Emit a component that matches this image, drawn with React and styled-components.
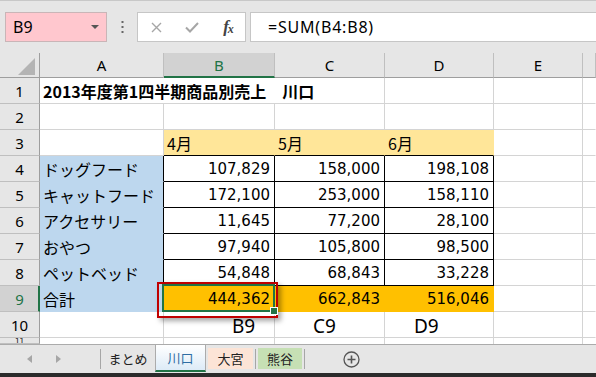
import React from 'react'
import styled, { createGlobalStyle } from 'styled-components'

const GRID = '#D4D4D4'
const GREEN = '#217346'
const YELLOW = '#FFE699'
const BLUE = '#BDD7EE'
const ORANGE = '#FFC000'
const CHROME = '#E6E6E6'

const GlobalStyle = createGlobalStyle`
    html, body {
        margin: 0;
        padding: 0;
        background: #fff;
    }
    body {
        width: 596px;
        height: 377px;
        overflow: hidden;
        font-family: "Noto Sans", sans-serif;
    }
    * {
        box-sizing: border-box;
    }
`

const Window = styled.div`
    width: 596px;
    height: 377px;
    display: flex;
    flex-direction: column;
    background: ${CHROME};
    overflow: hidden;
`

const FormulaBar = styled.div`
    height: 53px;
    flex: none;
    border-top: 1px solid #C8C8C8;
    display: flex;
    align-items: flex-start;
    padding: 11px 0 0 5px;
`

const NameBox = styled.div`
    width: 102px;
    height: 30px;
    background: #FFC7CE;
    border: 1px solid #C9B5B7;
    display: flex;
    align-items: center;
    justify-content: space-between;
    padding: 0 7px 0 7px;
    font-size: 16px;
    color: #000;
`

const Caret = styled.span`
    width: 0;
    height: 0;
    border-left: 4px solid transparent;
    border-right: 4px solid transparent;
    border-top: 4px solid #555;
`

const DotsSlot = styled.div`
    width: 30px;
    height: 30px;
    display: flex;
    align-items: center;
    justify-content: center;
`

const ButtonBox = styled.div`
    width: 109px;
    height: 30px;
    background: #fff;
    border: 1px solid #C6C6C6;
    display: flex;
    align-items: center;
    padding-left: 9px;
    gap: 18px;
`

const BarButton = styled.span`
    width: 18px;
    display: flex;
    justify-content: center;
    color: ${p => p.$dark ? '#444' : '#A6A6A6'};
`

const Fx = styled.span`
    font-family: "Liberation Serif", serif;
    font-style: italic;
    font-weight: 700;
    font-size: 17px;
    color: #444;
    letter-spacing: -1px;
    sub {
        font-size: 12px;
        vertical-align: -1px;
    }
`

const FormulaInput = styled.div`
    flex: 1;
    height: 30px;
    margin-left: 4px;
    background: #fff;
    border: 1px solid #C6C6C6;
    border-right: none;
    display: flex;
    align-items: center;
    padding-left: 17px;
    font-size: 16px;
    letter-spacing: 0.8px;
    color: #000;
`

const Sheet = styled.div`
    position: relative;
    display: grid;
    grid-template-columns: 40px 124px 111px 110px 109px 89px 13px;
    grid-template-rows: 25px repeat(10, 26px) 6px;
    background: #fff;
    flex: none;
    overflow: hidden;
`

const Corner = styled.div`
    background: ${CHROME};
    border-right: 1px solid #9E9E9E;
    border-bottom: 1px solid #9E9E9E;
    display: flex;
    align-items: flex-end;
    justify-content: flex-end;
    padding: 0 4px 2px 0;
`

const ColHead = styled.div`
    background: ${p => p.$sel ? '#D2D2D2' : CHROME};
    color: ${p => p.$sel ? GREEN : '#000'};
    border-right: 1px solid #BFBFBF;
    border-bottom: ${p => p.$sel ? `2px solid ${GREEN}` : '1px solid #9E9E9E'};
    display: flex;
    align-items: center;
    justify-content: center;
    font-size: 15px;
    padding-top: ${p => p.$sel ? '1px' : '0'};
`

const RowHead = styled.div`
    background: ${p => p.$sel ? '#D2D2D2' : CHROME};
    color: ${p => p.$sel ? GREEN : '#000'};
    border-right: ${p => p.$sel ? `2px solid ${GREEN}` : '1px solid #9E9E9E'};
    border-bottom: 1px solid #BFBFBF;
    display: flex;
    align-items: ${p => p.$cut ? 'flex-start' : 'center'};
    justify-content: center;
    font-size: ${p => p.$cut ? '8px' : '15px'};
    padding-left: ${p => p.$sel ? '1px' : '0'};
    overflow: hidden;
    line-height: ${p => p.$cut ? '6px' : 'normal'};
`

const Cell = styled.div`
    position: relative;
    grid-column: ${p => p.$span ? `span ${p.$span}` : 'auto'};
    background: ${p => p.$bg || '#fff'};
    border-right: 1px solid ${p => p.$rb || GRID};
    border-bottom: ${p => p.$nobottom ? 'none' : `1px solid ${p.$bb || GRID}`};
    display: flex;
    align-items: center;
    justify-content: ${p => p.$num ? 'flex-end' : 'flex-start'};
    padding: ${p => p.$num ? '0 4px 0 0' : '0 0 0 3px'};
    font-family: ${p => p.$num ? '"DejaVu Sans", sans-serif' : '"Noto Sans CJK JP", sans-serif'};
    font-size: ${p => p.$num ? '15px' : '16px'};
    font-weight: ${p => p.$bold ? 700 : 400};
    color: #000;
    white-space: nowrap;

    ${p => p.$active && `
        &::after {
            content: '';
            position: absolute;
            top: -2px;
            left: -2px;
            right: -1px;
            bottom: -1px;
            border: 2px solid ${GREEN};
        }
        &::before {
            content: '';
            position: absolute;
            right: -4px;
            bottom: -4px;
            width: 6px;
            height: 6px;
            background: ${GREEN};
            border: 1px solid #fff;
            z-index: 2;
        }
    `}
`

const Label = styled.span`
    font-family: "Noto Sans", sans-serif;
    font-size: 19px;
    padding-left: ${p => p.$pl}px;
    padding-top: 2px;
`

const Callout = styled.div`
    position: absolute;
    left: 157px;
    top: 229px;
    width: 121px;
    height: 36px;
    border: 2px solid #C00000;
    box-shadow: 3px 3px 5px rgba(0, 0, 0, 0.35);
    pointer-events: none;
`

const TabBar = styled.div`
    height: 29px;
    flex: none;
    border-top: 1px solid #ABABAB;
    display: flex;
    align-items: stretch;
    background: ${CHROME};
`

const Nav = styled.div`
    width: 100px;
    display: flex;
    align-items: center;
    padding-left: 27px;
    gap: 24px;
`

const Arrow = styled.span`
    width: 0;
    height: 0;
    border-top: 4px solid transparent;
    border-bottom: 4px solid transparent;
    ${p => p.$left ? 'border-right: 5px solid #A6A6A6;' : 'border-left: 5px solid #A6A6A6;'}
`

const Sep = styled.span`
    width: 1px;
    align-self: center;
    height: 20px;
    background: #A6A6A6;
    margin: 0 ${p => p.$m || 0}px;
`

const Tab = styled.div`
    width: ${p => p.$w}px;
    display: flex;
    align-items: center;
    justify-content: center;
    font-family: "Noto Sans CJK JP", sans-serif;
    font-size: 13px;
    color: ${p => p.$active ? '#2E6DA4' : '#222'};
    background: ${p => p.$active ? 'linear-gradient(#fff, #DDEBF7)' : (p.$bg || 'transparent')};
    margin: ${p => p.$active ? '0' : '3px 0 4px'};
    border-left: ${p => p.$active ? '1px solid #ABABAB' : 'none'};
    border-right: ${p => p.$active ? '1px solid #ABABAB' : 'none'};
    border-bottom: ${p => p.$active ? `2px solid ${GREEN}` : 'none'};
    margin-bottom: ${p => p.$active ? '1px' : '4px'};
    margin-left: ${p => p.$ml || 0}px;
`

const AddSheet = styled.div`
    display: flex;
    align-items: center;
    margin-left: 36px;
`

const DarkStrip = styled.div`
    flex: 1;
    background: #2B2B2B;
`

const products = [
    ['ドッグフード', '107,829', '158,000', '198,108'],
    ['キャットフード', '172,100', '253,000', '158,110'],
    ['アクセサリー', '11,645', '77,200', '28,100'],
    ['おやつ', '97,940', '105,800', '98,500'],
    ['ペットベッド', '54,848', '68,843', '33,228'],
]

const totals = ['444,362', '662,843', '516,046']

const Tail = () => (
    <>
        <Cell />
        <Cell $rb="transparent" />
    </>
)

export default function App() {
    return (
        <Window>
            <GlobalStyle />
            <FormulaBar>
                <NameBox>
                    <span>B9</span>
                    <Caret />
                </NameBox>
                <DotsSlot>
                    <svg width="3" height="13" viewBox="0 0 3 13">
                        <rect x="0.5" y="0" width="2" height="2" fill="#666" />
                        <rect x="0.5" y="5" width="2" height="2" fill="#666" />
                        <rect x="0.5" y="10" width="2" height="2" fill="#666" />
                    </svg>
                </DotsSlot>
                <ButtonBox>
                    <BarButton>
                        <svg width="11" height="11" viewBox="0 0 11 11">
                            <path d="M1 1L10 10M10 1L1 10" stroke="#A6A6A6" strokeWidth="1.4" />
                        </svg>
                    </BarButton>
                    <BarButton>
                        <svg width="14" height="11" viewBox="0 0 14 11">
                            <path d="M1 5.5L5 9.5L13 1" stroke="#A6A6A6" strokeWidth="2" fill="none" />
                        </svg>
                    </BarButton>
                    <BarButton $dark>
                        <Fx>f<sub>x</sub></Fx>
                    </BarButton>
                </ButtonBox>
                <FormulaInput>=SUM(B4:B8)</FormulaInput>
            </FormulaBar>

            <Sheet>
                <Corner>
                    <svg width="17" height="17" viewBox="0 0 17 17">
                        <path d="M17 0L17 17L0 17Z" fill="#B4B4B4" />
                    </svg>
                </Corner>
                <ColHead>A</ColHead>
                <ColHead $sel>B</ColHead>
                <ColHead>C</ColHead>
                <ColHead>D</ColHead>
                <ColHead>E</ColHead>
                <ColHead />

                <RowHead>1</RowHead>
                <Cell $span={3} $bold>2013年度第1四半期商品別売上　川口</Cell>
                <Cell />
                <Tail />

                <RowHead>2</RowHead>
                <Cell />
                <Cell />
                <Cell />
                <Cell />
                <Tail />

                <RowHead>3</RowHead>
                <Cell />
                <Cell $bg={YELLOW} $rb={YELLOW} $bb="#000">4月</Cell>
                <Cell $bg={YELLOW} $rb={YELLOW} $bb="#000">5月</Cell>
                <Cell $bg={YELLOW} $rb={YELLOW} $bb="#000">6月</Cell>
                <Tail />

                {products.map((row, i) => (
                    <React.Fragment key={i}>
                        <RowHead>{i + 4}</RowHead>
                        <Cell $bg={BLUE} $rb="#000" $bb={BLUE}>{row[0]}</Cell>
                        {row.slice(1).map((v, j) => (
                            <Cell key={j} $num $rb="#000" $bb="#000">{v}</Cell>
                        ))}
                        <Tail />
                    </React.Fragment>
                ))}

                <RowHead $sel>9</RowHead>
                <Cell $bg={BLUE} $rb={BLUE} $bb={BLUE}>合計</Cell>
                {totals.map((v, j) => (
                    <Cell key={j} $num $bg={ORANGE} $rb={ORANGE} $bb={ORANGE} $active={j === 0}>{v}</Cell>
                ))}
                <Tail />

                <RowHead>10</RowHead>
                <Cell />
                <Cell><Label $pl={65}>B9</Label></Cell>
                <Cell><Label $pl={35}>C9</Label></Cell>
                <Cell><Label $pl={26}>D9</Label></Cell>
                <Tail />

                <RowHead $cut>11</RowHead>
                <Cell $nobottom />
                <Cell $nobottom />
                <Cell $nobottom />
                <Cell $nobottom />
                <Cell $nobottom />
                <Cell $nobottom $rb="transparent" />

                <Callout />
            </Sheet>

            <TabBar>
                <Nav>
                    <Arrow $left />
                    <Arrow />
                </Nav>
                <Sep />
                <Tab $w={54}>まとめ</Tab>
                <Tab $w={51} $active>川口</Tab>
                <Tab $w={45} $bg="#FCE4D6" $ml={2}>大宮</Tab>
                <Sep $m={2} />
                <Tab $w={44} $bg="#C6E0B4">熊谷</Tab>
                <Sep $m={2} />
                <AddSheet>
                    <svg width="17" height="17" viewBox="0 0 17 17">
                        <circle cx="8.5" cy="8.5" r="7.5" stroke="#555" strokeWidth="1.3" fill="none" />
                        <path d="M8.5 4.5V12.5M4.5 8.5H12.5" stroke="#555" strokeWidth="1.6" />
                    </svg>
                </AddSheet>
            </TabBar>
            <DarkStrip />
        </Window>
    )
}
